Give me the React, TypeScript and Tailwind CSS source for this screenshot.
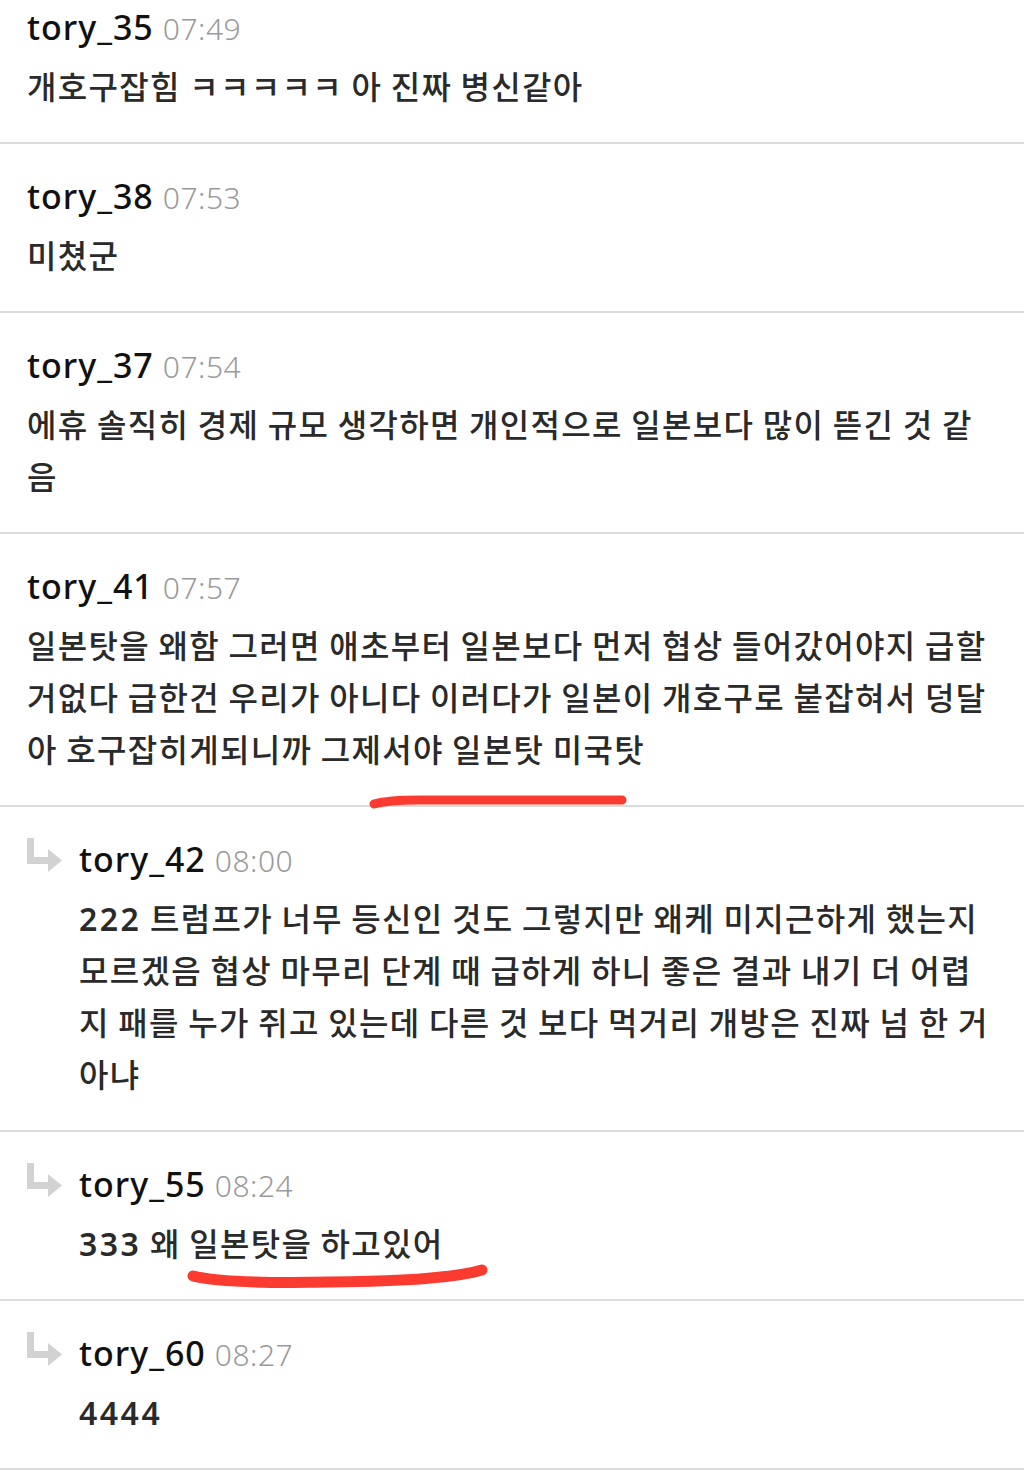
const comments = [
  { user: "tory_35", time: "07:49", lines: ["개호구잡힘 ㅋㅋㅋㅋㅋ 아 진짜 병신같아"], reply: false },
  { user: "tory_38", time: "07:53", lines: ["미쳤군"], reply: false },
  {
    user: "tory_37",
    time: "07:54",
    lines: ["에휴 솔직히 경제 규모 생각하면 개인적으로 일본보다 많이 뜯긴 것 같", "음"],
    reply: false,
  },
  {
    user: "tory_41",
    time: "07:57",
    lines: [
      "일본탓을 왜함 그러면 애초부터 일본보다 먼저 협상 들어갔어야지 급할",
      "거없다 급한건 우리가 아니다 이러다가 일본이 개호구로 붙잡혀서 덩달",
      "아 호구잡히게되니까 그제서야 일본탓 미국탓",
    ],
    reply: false,
  },
  {
    user: "tory_42",
    time: "08:00",
    lines: [
      "222 트럼프가 너무 등신인 것도 그렇지만 왜케 미지근하게 했는지",
      "모르겠음 협상 마무리 단계 때 급하게 하니 좋은 결과 내기 더 어렵",
      "지 패를 누가 쥐고 있는데 다른 것 보다 먹거리 개방은 진짜 넘 한 거",
      "아냐",
    ],
    reply: true,
  },
  { user: "tory_55", time: "08:24", lines: ["333 왜 일본탓을 하고있어"], reply: true },
  { user: "tory_60", time: "08:27", lines: ["4444"], reply: true },
];

function ReplyArrow() {
  return (
    <svg width="35" height="34" viewBox="0 0 35 34" className="shrink-0">
      <path d="M0 0h7v19h15v7H0z M21 11 L35 22.5 L21 34z" fill="#d2d2d2" />
    </svg>
  );
}

// leading numbers ("222", "4444") are set wider in the original font
function Line({ text }: { text: string }) {
  const m = text.match(/^\d+/);
  if (!m) return <div className="h-[52px] whitespace-nowrap">{text}</div>;
  return (
    <div className="h-[52px] whitespace-nowrap">
      <span className="font-['Noto_Sans',sans-serif] font-semibold leading-none tracking-[2.5px]">{m[0]}</span>
      {text.slice(m[0].length)}
    </div>
  );
}

export default function App() {
  return (
    <div className="relative w-[1024px] h-[1484px] overflow-hidden bg-white font-['Noto_Sans','Noto_Sans_CJK_KR',sans-serif]">
      <div className="-mt-[25px]">
        {comments.map((c) => (
          <div key={c.user} className="border-b-2 border-[#dcdcdc] pl-[27px] pr-[20px] pt-[26px] pb-[31px]">
            <div className="flex">
              {c.reply && (
                <div className="w-[52px] shrink-0 pt-[5px]">
                  <ReplyArrow />
                </div>
              )}
              <div>
                <div className="flex items-baseline h-[52px] leading-[52px] whitespace-nowrap">
                  <span className="text-[34px] font-medium tracking-[1px] text-[#111]">{c.user}</span>
                  <span className="ml-[9px] text-[30px] font-light tracking-[0.5px] text-[#9a9a9a]">{c.time}</span>
                </div>
                <div className="mt-[6px] text-[32px] leading-[52px] font-medium tracking-[1.3px] text-[#2a2a2a] font-['Noto_Sans_CJK_KR','Noto_Sans',sans-serif]">
                  {c.lines.map((l, i) => (
                    <Line key={i} text={l} />
                  ))}
                </div>
              </div>
            </div>
          </div>
        ))}
      </div>

      {/* red pen marks over the text */}
      <svg className="absolute inset-0 pointer-events-none" width="1024" height="1484">
        <path
          d="M374 804 Q388 800 420 800 L622 800"
          stroke="#fb3a30"
          strokeWidth="9"
          strokeLinecap="round"
          fill="none"
        />
        <path
          d="M193 1276 Q225 1284 330 1282 Q445 1281 482 1270"
          stroke="#fb3a30"
          strokeWidth="11"
          strokeLinecap="round"
          fill="none"
        />
      </svg>
    </div>
  );
}
